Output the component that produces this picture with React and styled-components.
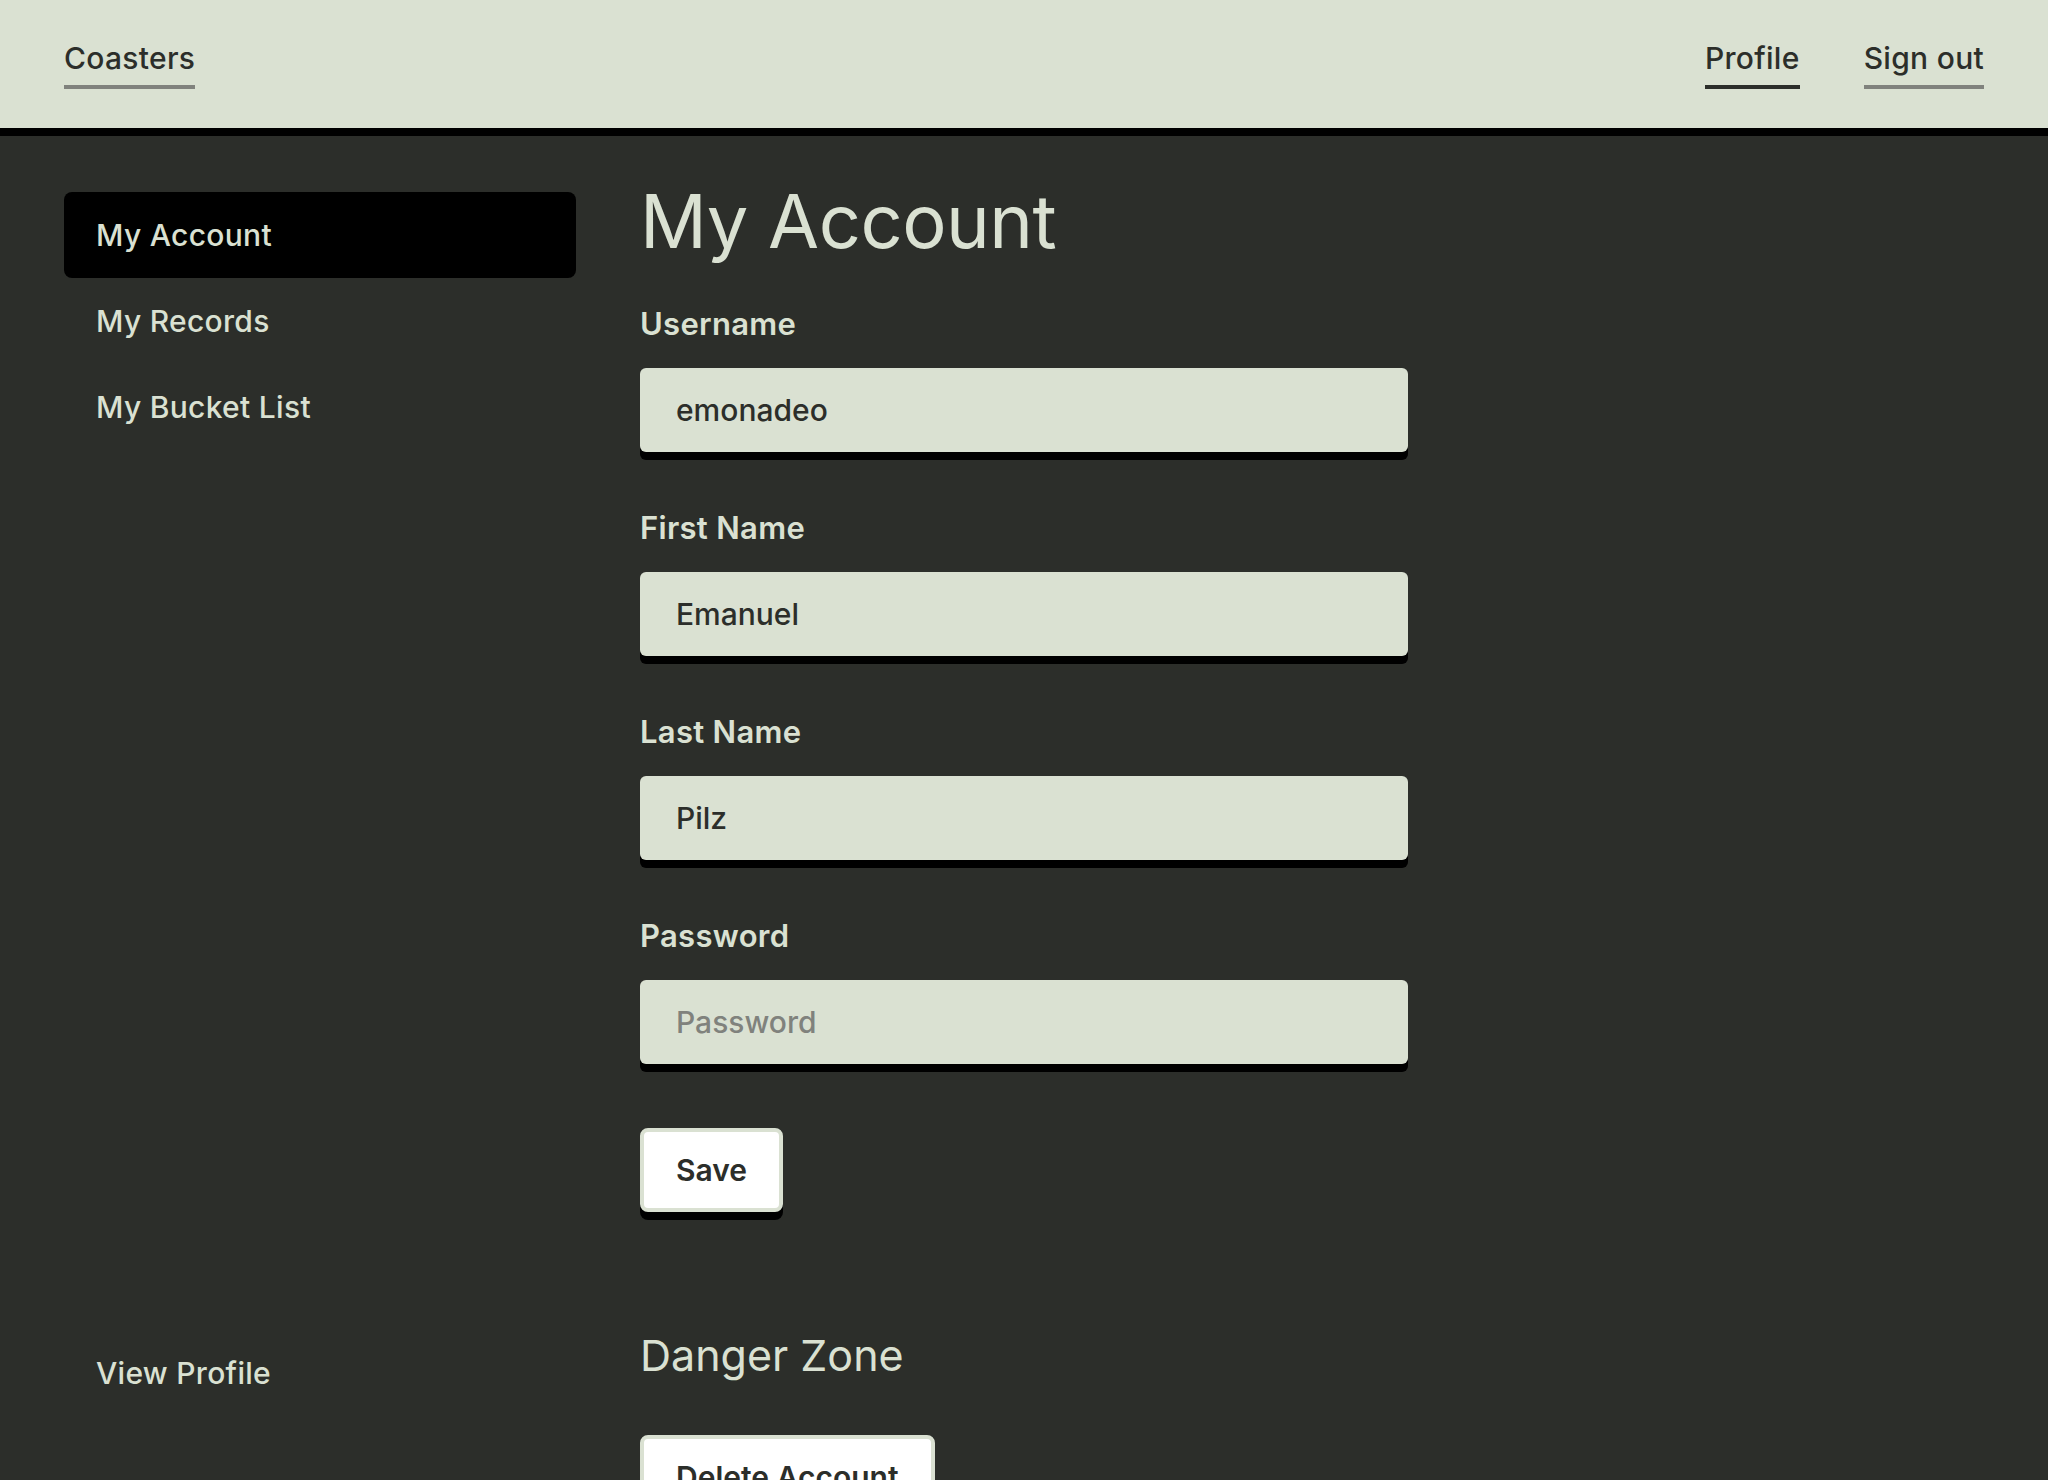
import React from "react";
import styled, { createGlobalStyle } from "styled-components";

const sage = "#dae1d2";
const ink = "#2c2e2a";

const GlobalStyle = createGlobalStyle`
  body {
    margin: 0;
    background-color: ${ink};
    font-family: Inter, "Noto Sans", sans-serif;
    color: ${sage};
  }
  * {
    box-sizing: border-box;
  }
`

const Header = styled.header`
  display: flex;
  align-items: center;
  justify-content: space-between;
  height: 136px;
  padding: 0 64px;
  background-color: ${sage};
  border-bottom: 8px solid #000;
`

const HeaderNav = styled.nav`
  display: flex;
  gap: 64px;
`

const HeaderLink = styled.a`
  display: inline-block;
  padding-bottom: 9px;
  font-size: 30px;
  font-weight: 500;
  line-height: 36px;
  letter-spacing: 0.3px;
  color: ${ink};
  text-decoration: none;
  border-bottom: 4px solid ${props => (props.$active ? ink : "#80827d")};
`

const Layout = styled.div`
  display: flex;
  gap: 64px;
  padding: 0 64px;
`

const Sidebar = styled.aside`
  display: flex;
  flex-direction: column;
  justify-content: space-between;
  flex: 0 0 512px;
  height: calc(100vh - 136px);
  padding: 56px 0 64px;
  position: sticky;
  top: 0;
`

const SideList = styled.nav`
  display: flex;
  flex-direction: column;
`

const SideItem = styled.a`
  display: block;
  padding: 24px 32px;
  border-radius: 8px;
  font-size: 30px;
  font-weight: 500;
  line-height: 38px;
  letter-spacing: 0.3px;
  color: ${sage};
  text-decoration: none;
  background-color: ${props => (props.$active ? "#000" : "transparent")};
`

const Main = styled.main`
  flex: 1;
  padding-top: 46px;
  padding-bottom: 120px;
`

const Title = styled.h1`
  margin: 0 0 46px;
  font-size: 74px;
  font-weight: 400;
  line-height: 78px;
  letter-spacing: -0.5px;
`

const Form = styled.form`
  display: flex;
  flex-direction: column;
  gap: 58px;
  max-width: 768px;
`

const Field = styled.label`
  display: flex;
  flex-direction: column;
  gap: 26px;
`

const FieldLabel = styled.span`
  font-size: 31px;
  font-weight: 600;
  line-height: 36px;
  letter-spacing: 0.3px;
`

const Input = styled.input`
  height: 84px;
  padding: 0 36px;
  border: none;
  border-radius: 6px;
  background-color: ${sage};
  box-shadow: 0 8px 0 #000;
  font-family: inherit;
  font-size: 30px;
  font-weight: 500;
  color: ${ink};
  outline: none;

  &::placeholder {
    color: #80827d;
  }
`

const Button = styled.button`
  align-self: flex-start;
  height: 84px;
  padding: 0 32px;
  border: 4px solid ${sage};
  border-radius: 8px;
  background-color: #fff;
  box-shadow: 0 8px 0 #000;
  font-family: inherit;
  font-size: 30px;
  font-weight: 600;
  color: ${ink};
  cursor: pointer;
`

const SaveRow = styled.div`
  display: flex;
  padding-top: 6px;
`

const DangerTitle = styled.h2`
  margin: 121px 0 58px;
  font-size: 43px;
  font-weight: 400;
  line-height: 44px;
`

const fields = [
  { label: "Username", value: "emonadeo" },
  { label: "First Name", value: "Emanuel" },
  { label: "Last Name", value: "Pilz" },
  { label: "Password", placeholder: "Password", type: "password" },
]

const App = () => {
  return (
    <>
      <GlobalStyle />
      <Header>
        <HeaderLink href="#">Coasters</HeaderLink>
        <HeaderNav>
          <HeaderLink href="#" $active>Profile</HeaderLink>
          <HeaderLink href="#">Sign out</HeaderLink>
        </HeaderNav>
      </Header>
      <Layout>
        <Sidebar>
          <SideList>
            <SideItem href="#" $active>My Account</SideItem>
            <SideItem href="#">My Records</SideItem>
            <SideItem href="#">My Bucket List</SideItem>
          </SideList>
          <SideItem href="#">View Profile</SideItem>
        </Sidebar>
        <Main>
          <Title>My Account</Title>
          <Form onSubmit={e => e.preventDefault()}>
            {fields.map(f => (
              <Field key={f.label}>
                <FieldLabel>{f.label}</FieldLabel>
                <Input
                  type={f.type || "text"}
                  defaultValue={f.value}
                  placeholder={f.placeholder}
                />
              </Field>
            ))}
            <SaveRow>
              <Button type="submit">Save</Button>
            </SaveRow>
          </Form>
          <DangerTitle>Danger Zone</DangerTitle>
          <Button type="button">Delete Account</Button>
        </Main>
      </Layout>
    </>
  );
}

export default App;
